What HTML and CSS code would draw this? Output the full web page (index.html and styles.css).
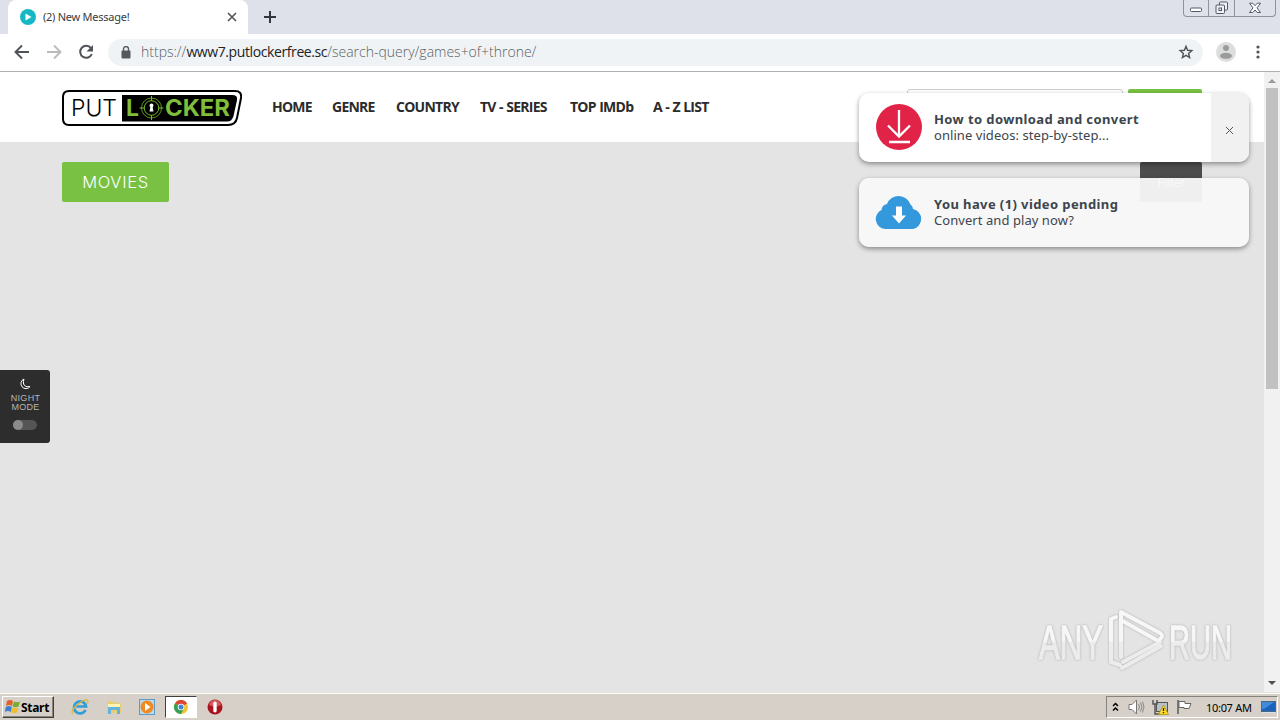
FILE: index.html
```html
<!DOCTYPE html>
<html lang="en">
<head>
  <meta charset="UTF-8">
  <meta name="viewport" content="width=device-width, initial-scale=1.0">
  <title>(2) New Message!</title>
  <link rel="stylesheet" href="styles.css">
</head>
<body>
  <div class="screen">
    <!-- Browser tabs -->
    <div class="tab-strip">
      <div class="tab">
        <svg class="favicon" width="16" height="16" viewBox="0 0 16 16"><circle cx="8" cy="8" r="8" fill="#16b8c5"/><path d="M5.5 4.5v7l6-3.5z" fill="#fff"/></svg>
        <span class="tab-title">(2) New Message!</span>
        <svg width="10" height="10" viewBox="0 0 10 10"><path d="M1 1l8 8M9 1l-8 8" stroke="#54585d" stroke-width="1.7"/></svg>
      </div>
      <svg class="new-tab" width="12" height="12" viewBox="0 0 12 12"><path d="M6 0v12M0 6h12" stroke="#33363b" stroke-width="2"/></svg>
      <div class="window-buttons">
        <span class="win min"><svg width="14" height="6" viewBox="0 0 14 6"><rect x="1.5" y="1" width="11" height="3.5" rx="1" fill="#fff" stroke="#535866"/></svg></span>
        <span class="win max"><svg width="14" height="14" viewBox="0 0 14 14"><g fill="#eef0f4" stroke="#535866"><rect x="4.5" y="1" width="8" height="8" rx="1"/><rect x="1" y="4" width="8.5" height="8.5" rx="1"/><rect x="4" y="7" width="2.5" height="2.5"/></g></svg></span>
        <span class="win close"><svg width="14" height="12" viewBox="0 0 14 12"><path d="M1.5 1.2h3.2L7 3.7l2.3-2.5h3.2L9 5.9l3.5 4.6H9.3L7 8 4.7 10.5H1.5L5 5.9z" fill="#fff" stroke="#535866"/></svg></span>
      </div>
    </div>

    <!-- Address bar -->
    <div class="toolbar">
      <svg class="tool" width="16" height="16" viewBox="0 0 16 16"><path d="M15 8H2M8 1.5L1.5 8 8 14.5" fill="none" stroke="#505357" stroke-width="1.9"/></svg>
      <svg class="tool" width="16" height="16" viewBox="0 0 16 16"><path d="M1 8h13M8 1.5L14.5 8 8 14.5" fill="none" stroke="#b9bbbd" stroke-width="1.9"/></svg>
      <svg class="tool" width="16" height="16" viewBox="0 0 16 16"><path d="M13 4.2A6 6 0 1 0 13.8 10" fill="none" stroke="#505357" stroke-width="2"/><path d="M15 1v6.5H8.5z" fill="#505357"/></svg>
      <div class="address">
        <svg width="10" height="13" viewBox="0 0 10 13"><rect x=".5" y="4.5" width="9" height="8" rx="1" fill="#55595e"/><path d="M2.5 5V3a2.5 2.5 0 0 1 5 0v2" fill="none" stroke="#55595e" stroke-width="1.4"/></svg>
        <span class="url">https://<b>www7.putlockerfree.sc</b>/search-query/games+of+throne/</span>
        <svg width="16" height="16" viewBox="0 0 16 16"><path d="M8 2.3l1.6 4 4.200.3-3.200 2.800 1 4.100L8 11.300l-3.600 2.200 1-4.100-3.200-2.800 4.200-.3z" fill="none" stroke="#505357" stroke-width="1.4"/></svg>
      </div>
      <svg class="avatar" width="20" height="20" viewBox="0 0 20 20"><circle cx="10" cy="10" r="10" fill="#dcdddd"/><circle cx="10" cy="6" r="3" fill="#9b9b9b"/><ellipse cx="10" cy="13.8" rx="6" ry="3" fill="#9b9b9b"/></svg>
      <svg class="menu" width="4" height="14" viewBox="0 0 4 14"><g fill="#505357"><circle cx="2" cy="2" r="1.6"/><circle cx="2" cy="7" r="1.6"/><circle cx="2" cy="12" r="1.6"/></g></svg>
    </div>

    <!-- Web page -->
    <div class="viewport">
      <div class="page">
        <header class="header">
          <svg class="logo" width="180" height="36" viewBox="0 0 180 36">
            <path d="M7 1H173Q180 1 179 8L175 28Q173.500 35 166 35H7Q1 35 1 29V7Q1 1 7 1z" fill="#fff" stroke="#000" stroke-width="2"/>
            <path d="M60 5H170Q176 5 175 10L171.500 26Q170 31.500 165 31.500H60z" fill="#000"/>
            <text class="logo-put" x="9" y="26" textLength="46" lengthAdjust="spacingAndGlyphs">PUT</text>
            <text class="logo-locker" x="64" y="26" textLength="13" lengthAdjust="spacingAndGlyphs">L</text>
            <text class="logo-locker" x="103" y="26" textLength="65" lengthAdjust="spacingAndGlyphs">CKER</text>
            <circle cx="89.5" cy="18" r="10" fill="none" stroke="#74b52d" stroke-width=".8"/>
            <circle cx="89.5" cy="18" r="7.3" fill="none" stroke="#74b52d"/>
            <path d="M89.500 6v5M89.500 25v5M77.500 18h5M96.500 18h5" stroke="#74b52d"/>
            <path d="M87.500 15.500a2 2 0 1 1 4 0l-.8 2 .8 4h-4l.8-4z" fill="#fff"/>
          </svg>
          <nav class="nav">
            <a>HOME</a>
            <a>GENRE</a>
            <a>COUNTRY</a>
            <a>TV - SERIES</a>
            <a>TOP IMDb</a>
            <a>A - Z LIST</a>
          </nav>
          <div class="search">
            <div class="search-input"></div>
            <div class="search-button"></div>
          </div>
        </header>

        <main class="main">
          <div class="heading">MOVIES</div>
          <div class="filter">Filter</div>
        </main>

        <aside class="night">
          <svg width="12" height="12" viewBox="0 0 12 12"><path d="M5 1A5 5 0 1 0 11 8.500Q6 9.500 4.600 6 4 3 5 1z" fill="none" stroke="#fff"/></svg>
          <span>NIGHT<br>MODE</span>
          <div class="switch"><i></i></div>
        </aside>

        <div class="toasts">
          <div class="toast">
            <svg width="48" height="50" viewBox="0 0 48 50"><circle cx="24" cy="24" r="23" fill="#e02347"/><path d="M24 7v26M13 22.500l11 11 11-11M14 39h21" fill="none" stroke="#fff" stroke-width="2.3"/></svg>
            <div class="toast-text"><b>How to download and convert</b><span>online videos: step-by-step...</span></div>
            <div class="toast-close"><svg width="9" height="9" viewBox="0 0 9 9"><path d="M1 1l7 7M8 1L1 8" stroke="#555"/></svg></div>
          </div>
          <div class="toast pending">
            <svg width="48" height="50" viewBox="0 0 48 50"><path d="M10 41A10 10 0 0 1 6.500 22Q7 17 12 16A12.500 12.500 0 0 1 35.500 16.500Q38 18 38 21A10.200 10.200 0 0 1 38 41z" fill="#3498dc"/><path d="M21 18.500h6v9h4l-7 8-7-8h4z" fill="#fff"/></svg>
            <div class="toast-text"><b>You have (1) video pending</b><span>Convert and play now?</span></div>
          </div>
        </div>

        <svg class="watermark" width="208" height="70" viewBox="0 0 208 70">
          <defs>
            <linearGradient id="shine" x1="0" y1="0" x2="0" y2="66" gradientUnits="userSpaceOnUse">
              <stop offset="0.5" stop-color="#f7f7f7"/>
              <stop offset="0.52" stop-color="#ececec"/>
            </linearGradient>
          </defs>
          <g class="mark">
            <text x="3" y="51" textLength="64" lengthAdjust="spacingAndGlyphs">ANY</text>
            <text x="133" y="51" textLength="63" lengthAdjust="spacingAndGlyphs">RUN</text>
            <path d="M80 9L75 11V54L84 57M85 49V4L124 25Q128 28 124 31M85 12L124 34L87 54M85 15V49M86 60L125 38" fill="none" stroke="url(#shine)" stroke-width="4" stroke-linecap="round" stroke-linejoin="round"/>
          </g>
        </svg>
      </div>
      <div class="scrollbar">
        <i class="arrow up"></i>
        <div class="thumb"></div>
        <i class="arrow down"></i>
      </div>
    </div>

    <!-- Windows taskbar -->
    <div class="taskbar">
      <div class="start">
        <svg width="17" height="16" viewBox="0 0 17 16"><path d="M3 2q3-2 6 0L8 7Q5 5 2 7z" fill="#e45f29"/><path d="M10 2.500q3 1.500 6 0L14.500 7.500q-3 1.500-6 0z" fill="#78ad35"/><path d="M1.800 8q3-2 6 0l-1 5q-3-2-6 0z" fill="#3d80cd"/><path d="M8.500 8.500q3 1.500 6 0l-1.500 5q-3 1.500-6 0z" fill="#f0bd2c"/></svg>
        <b>Start</b>
      </div>
      <div class="launch">
        <svg width="18" height="18" viewBox="0 0 18 18"><path d="M14.500 12A6 6 0 1 1 15 8.500H5" fill="none" stroke="#319ed8" stroke-width="2.7"/><path d="M2 16Q-1 13 6 7T16 2Q18 3 16 6" fill="none" stroke="#e2b63b" stroke-width="1.3"/></svg>
      </div>
      <div class="launch">
        <svg width="18" height="18" viewBox="0 0 18 18"><path d="M2 3h6l1 2h7v10H2z" fill="#e8ce72"/><path d="M3 6h12v3H3z" fill="#fff3b5"/><path d="M3 16V9h12v7h-3v-4H6v4z" fill="#65b4de"/></svg>
      </div>
      <div class="launch">
        <svg width="18" height="18" viewBox="0 0 18 18"><rect x="1.5" y="1.5" width="15" height="15" fill="#b9d9ed" stroke="#5b9bc8"/><circle cx="9" cy="9" r="6.5" fill="#ef8a20"/><path d="M7 5v8l5.500-4z" fill="#fff"/></svg>
      </div>
      <div class="launch active">
        <svg width="14" height="14" viewBox="0 0 14 14"><circle cx="7" cy="7" r="7" fill="#f4c430"/><path d="M7 7L.9 3.500A7 7 0 0 1 13.100 3.500z" fill="#dc4635"/><path d="M7 7L.9 3.500A7 7 0 0 0 7 14L10 8.500z" fill="#36a154"/><circle cx="7" cy="7" r="3.3" fill="#fff"/><circle cx="7" cy="7" r="2.5" fill="#4284d8"/></svg>
      </div>
      <div class="launch">
        <svg width="16" height="16" viewBox="0 0 16 16"><circle cx="8" cy="8" r="7.5" fill="#a9141d"/><path d="M2 6a6 5 0 0 1 12 0q-6 3-12 0z" fill="#d55559"/><rect x="6.3" y="2.5" width="3.4" height="11" rx="1.7" fill="#fff"/></svg>
      </div>
      <div class="tray">
        <svg width="7" height="10" viewBox="0 0 7 10"><path d="M1 4l2.500-2.500L6 4M1 8.500L3.500 6 6 8.500" fill="none" stroke="#000" stroke-width="1.5"/></svg>
        <svg class="speaker" width="17" height="16" viewBox="0 0 17 16"><path d="M1 5.500h3L8.500 1v14L4 10.500H1z" fill="#fff" stroke="#777"/><path d="M10.500 5q2 3 0 6M12.500 3.500q3 4.500 0 9M14.500 2.500q3 5.500 0 11" fill="none" stroke="#888"/></svg>
        <svg width="17" height="16" viewBox="0 0 17 16"><rect x="4.5" y="3.5" width="11" height="9" fill="#b9c0c6" stroke="#555"/><path d="M1 1v4h4V1M3 5v10h6" fill="none" stroke="#555" stroke-width="1.5"/><path d="M11.500 6l5 9.500h-10z" fill="#ffdb22" stroke="#a88a14" stroke-width=".7"/><path d="M11.500 9v3M11.500 13v1.200" stroke="#222" stroke-width="1.3"/></svg>
        <svg width="17" height="16" viewBox="0 0 17 16"><path d="M2 1v14" stroke="#777" stroke-width="2"/><path d="M3 2.500h6v2h6l-2 5H8v-1H3z" fill="#fff" stroke="#666"/></svg>
        <span class="clock">10:07 AM</span>
        <svg width="15" height="13" viewBox="0 0 15 13"><rect x=".5" y=".5" width="14" height="10" fill="#1b63bd" stroke="#4b6783"/><path d="M1 1h12L3 8H1z" fill="#3f8cd9"/><path d="M1 11.500h13" stroke="#d7e3eb"/></svg>
      </div>
    </div>
  </div>
</body>
</html>
```
FILE: styles.css
```css
body {
  margin: 0;
  overflow: hidden;
  font-family: "Open Sans", sans-serif;
}
svg {
  display: block;
  flex-shrink: 0;
}
.screen {
  width: 1280px;
  height: 720px;
  display: flex;
  flex-direction: column;
}

/* browser chrome */
.tab-strip {
  display: flex;
  height: 34px;
  background: #dee1e9;
}
.tab {
  box-sizing: border-box;
  width: 240px;
  margin-left: 8px;
  padding: 0 11px 0 12px;
  display: flex;
  align-items: center;
  background: #fff;
  border-radius: 8px 8px 0 0;
}
.tab-title {
  flex: 1;
  margin-left: 7px;
  padding-bottom: 1px;
  font: 11px "Noto Sans", sans-serif;
  letter-spacing: -0.25px;
  color: #393c40;
}
.new-tab {
  margin: 11px 0 0 16px;
}
.window-buttons {
  box-sizing: border-box;
  display: flex;
  width: 93px;
  height: 17px;
  margin-left: auto;
  margin-right: 4px;
  border: 1px solid #8f939e;
  border-top: 0;
  border-radius: 0 0 4px 4px;
}
.win {
  display: flex;
  justify-content: center;
  align-items: center;
}
.min {
  width: 24px;
  align-items: flex-end;
  padding-bottom: 3px;
  box-sizing: border-box;
}
.max {
  width: 25px;
  border-left: 1px solid #8f939e;
  border-right: 1px solid #8f939e;
}
.close {
  flex: 1;
}
.toolbar {
  box-sizing: border-box;
  display: flex;
  align-items: center;
  height: 38px;
  padding: 0 20px 1px 14px;
  background: #fff;
  border-bottom: 1px solid #afb0b2;
}
.tool {
  margin-right: 16px;
}
.address {
  box-sizing: border-box;
  display: flex;
  align-items: center;
  width: 1095px;
  height: 27px;
  margin-left: -2px;
  padding: 0 9px 0 13px;
  border-radius: 14px;
  background: #f0f3f5;
}
.url {
  flex: 1;
  margin-left: 10px;
  padding-bottom: 2px;
  font: 300 14px "Open Sans", sans-serif;
  color: #5b5f63;
}
.url b {
  font-weight: 400;
  letter-spacing: -0.4px;
  color: #222;
}
.avatar {
  margin-left: 13px;
}
.menu {
  margin-left: auto;
}

/* page */
.viewport {
  display: flex;
  height: 620px;
}
.page {
  position: relative;
  width: 1264px;
  background: #e4e4e4;
}
.header {
  box-sizing: border-box;
  display: flex;
  height: 70px;
  padding: 18px 62px 0;
  background: #fff;
}
.nav {
  display: grid;
  grid-template-columns: 60px 64px 84px 90px 83px 70px;
  margin-left: 30px;
  padding-top: 7px;
  font-size: 14px;
  line-height: 20px;
  font-weight: 700;
  letter-spacing: -0.75px;
  word-spacing: 0.5px;
  color: #2b2b2b;
  white-space: nowrap;
}
.search {
  display: flex;
  gap: 5px;
  margin-left: auto;
}
.search-input {
  box-sizing: border-box;
  width: 216px;
  height: 34px;
  margin-top: -1px;
  border: 1px solid #ccc;
  border-radius: 3px;
}
.search-button {
  width: 74px;
  height: 34px;
  margin-top: -1px;
  border-radius: 2px;
  background: #79c143;
}
.logo-put {
  font: 300 23px Inter, sans-serif;
}
.logo-locker {
  font: 700 23px Inter, sans-serif;
  fill: #7fbd3b;
}
.main {
  display: flex;
  justify-content: space-between;
  padding: 20px 62px;
}
.heading {
  width: 107px;
  height: 40px;
  border-radius: 2px;
  background: #79c143;
  color: #fff;
  font: 300 16.5px/41px Inter, sans-serif;
  letter-spacing: 0.7px;
  text-align: center;
}
.filter {
  width: 62px;
  height: 40px;
  border-radius: 2px;
  background: #4d4d4d;
  color: #fff;
  font: 12px/42px "Liberation Sans", sans-serif;
  text-align: center;
}
.night {
  position: absolute;
  left: 0;
  top: 298px;
  width: 50px;
  height: 73px;
  display: flex;
  flex-direction: column;
  align-items: center;
  border-radius: 0 3px 3px 0;
  background: #2d2d2d;
  color: #b6b6b6;
  text-align: center;
  font: 9px/9px "Liberation Sans", sans-serif;
  letter-spacing: 0.3px;
}
.night svg {
  margin: 8px 0 4px;
}
.night span {
  padding-left: 1px;
}
.switch {
  width: 24px;
  height: 10px;
  margin-top: 8px;
  border-radius: 5px;
  background: #555;
}
.switch i {
  display: block;
  width: 10px;
  height: 10px;
  border-radius: 50%;
  background: #8b8b8b;
}
.toasts {
  position: absolute;
  left: 859px;
  top: 21px;
  display: flex;
  flex-direction: column;
  gap: 16px;
}
.toast {
  box-sizing: border-box;
  display: flex;
  align-items: center;
  width: 390px;
  height: 69px;
  padding-left: 16px;
  overflow: hidden;
  border-radius: 10px;
  background: #fff;
  box-shadow: 0 2px 5px rgba(0, 0, 0, 0.4);
}
.pending {
  background: rgba(248, 248, 248, 0.95);
}
.toast-text {
  display: flex;
  flex-direction: column;
  margin-left: 11px;
  padding-bottom: 2px;
  font: 13px/16px "Noto Sans", sans-serif;
  letter-spacing: 0.06px;
  color: #3c454d;
  white-space: nowrap;
}
.toast-text b {
  letter-spacing: 0.4px;
}
.toast-close {
  box-sizing: border-box;
  display: flex;
  align-items: center;
  justify-content: center;
  width: 38px;
  height: 69px;
  padding-top: 6px;
  padding-right: 1px;
  margin-left: auto;
  background: #f1f1f1;
}
.watermark {
  position: absolute;
  left: 1036px;
  top: 536px;
}
.mark {
  filter: drop-shadow(0 0 1px #aaa);
}
.mark text {
  font: 49px "Liberation Sans", sans-serif;
  fill: url(#shine);
  stroke: url(#shine);
  stroke-width: 1.5px;
}
.scrollbar {
  display: flex;
  flex-direction: column;
  align-items: center;
  width: 16px;
  background: #f1f1f1;
}
.thumb {
  width: 12px;
  height: 301px;
  background: #c1c1c1;
}
.arrow {
  border: 4px solid transparent;
}
.up {
  margin: 7px 0 5px;
  border-top: 0;
  border-bottom: 4px solid #999;
}
.down {
  margin-top: auto;
  margin-bottom: 7px;
  border-bottom: 0;
  border-top: 4px solid #505050;
}

/* taskbar */
.taskbar {
  box-sizing: border-box;
  display: flex;
  align-items: center;
  height: 28px;
  padding: 1px 2px 0;
  background: #d6d0c8;
  border-top: 1px solid #e4e1dc;
  box-shadow: inset 0 1px #fff;
}
.start {
  box-sizing: border-box;
  display: flex;
  align-items: center;
  width: 52px;
  height: 22px;
  padding-left: 1px;
  border: 1px solid #fff;
  border-right-color: #404040;
  border-bottom-color: #404040;
  box-shadow: inset -1px -1px #87847e;
  font: 12px "Noto Sans", sans-serif;
  letter-spacing: -0.3px;
  margin-right: 10px;
}
.launch {
  box-sizing: border-box;
  display: flex;
  align-items: center;
  justify-content: center;
  width: 32px;
  height: 22px;
  margin-right: 1.7px;
}
.active {
  background: #fff;
  border: 1px solid #404040;
  border-right-color: #fff;
  border-bottom-color: #fff;
}
.tray {
  box-sizing: border-box;
  display: flex;
  align-items: center;
  gap: 7px;
  width: 172px;
  height: 22px;
  margin-left: auto;
  padding-left: 5px;
  border: 1px solid #87847e;
  border-right-color: #fff;
  border-bottom-color: #fff;
}
.speaker {
  margin-left: 2px;
}
.clock {
  width: 48px;
  margin-left: 6px;
  font: 11px "Noto Sans", sans-serif;
  letter-spacing: -0.3px;
  white-space: nowrap;
}
```
